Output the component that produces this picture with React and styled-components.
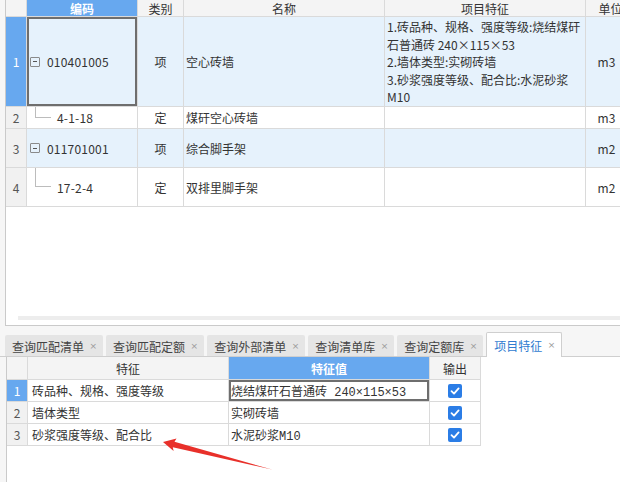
import React from "react";
import styled, { createGlobalStyle, css } from "styled-components";

const GlobalStyle = createGlobalStyle`
  html, body { margin: 0; padding: 0; background: #f6f6f6; }
  body { font-family: "Noto Sans CJK SC", "Noto Sans", sans-serif; }
  * { box-sizing: border-box; }
`;

const BLUE = "#67a8ef";
const LINE = "#dadada";

const Screen = styled.div`
  position: relative;
  width: 620px;
  height: 482px;
  overflow: hidden;
  background: #f6f6f6;
  display: flex;
  flex-direction: column;
  font-size: 12px;
  color: #333;
`;

const TopPanel = styled.div`
  margin-left: 5px;
  height: 326px;
  flex: none;
  border-left: 1px solid #cacaca;
  border-bottom: 1px solid #cacaca;
  background: #fff;
  display: flex;
  flex-direction: column;
  overflow: hidden;
`;

const topCols = "21px 111px 46px 201px 201px 50px";

const Row = styled.div`
  display: grid;
  grid-template-columns: ${(p) => p.$cols};
  height: ${(p) => p.$h}px;
  flex: none;
  background: ${(p) => (p.$tint ? "#e6f2fc" : "#fff")};
`;

const Cell = styled.div`
  position: relative;
  border-right: 1px solid ${LINE};
  border-bottom: 1px solid ${LINE};
  display: flex;
  align-items: center;
  justify-content: ${(p) => (p.$center ? "center" : "flex-start")};
  padding-left: ${(p) => (p.$pad ?? 2)}px;
  white-space: nowrap;
  overflow: hidden;
  ${(p) =>
    p.$selected &&
    css`
      box-shadow: inset 0 0 0 2px #6e6e6e;
    `}
`;

const HeadCell = styled(Cell)`
  justify-content: center;
  padding-left: 0;
  background: ${(p) => (p.$active ? BLUE : "#f4f4f4")};
  color: ${(p) => (p.$active ? "#fff" : "#333")};
  font-weight: ${(p) => (p.$active ? 700 : 400)};
`;

const NumCell = styled(Cell)`
  justify-content: center;
  padding-left: 0;
  background: ${(p) => (p.$active ? BLUE : "#f1f1f1")};
  color: ${(p) => (p.$active ? "#fff" : "#555")};
`;

const UnitCell = styled(Cell)`
  justify-content: center;
  padding: 0 8px 0 0;
`;

const CodeCell = styled(Cell)`
  padding-left: 3px;
  align-items: ${(p) => (p.$child ? "stretch" : "center")};
`;

const Toggle = styled.span`
  width: 10px;
  height: 10px;
  border: 1px solid #8a8a8a;
  border-radius: 1px;
  margin-right: 7px;
  display: flex;
  align-items: center;
  justify-content: center;
  flex: none;
  &::after {
    content: "";
    width: 4px;
    height: 1px;
    background: #555;
  }
`;

const TreeLine = styled.span`
  width: 16px;
  height: 50%;
  margin-left: 5px;
  margin-right: 6px;
  border-left: 1px solid #bcbcbc;
  border-bottom: 1px solid #bcbcbc;
  flex: none;
`;

const CodeText = styled.span`
  align-self: center;
  letter-spacing: 0.2px;
`;

const FeatureText = styled.div`
  white-space: pre-line;
  line-height: 17.5px;
  padding-top: 1px;
`;

const Filler = styled.div`
  flex: 1;
`;

const ScrollTrack = styled.div`
  height: 4px;
  margin: 0 0 5px 12px;
  background: #ededed;
  flex: none;
`;

const TabBar = styled.div`
  margin-top: 6px;
  height: 25px;
  flex: none;
  display: flex;
  align-items: flex-end;
  gap: 3px;
  padding-left: 5px;
  border-bottom: 1px solid #cfcfcf;
`;

const Tab = styled.div`
  height: ${(p) => (p.$active ? 25 : 21)}px;
  margin-bottom: ${(p) => (p.$active ? -1 : 0)}px;
  padding: 0 6px 0 7px;
  display: flex;
  align-items: center;
  gap: 5.5px;
  border-radius: 2px 2px 0 0;
  background: ${(p) => (p.$active ? "#fff" : "#e5e5e5")};
  border: ${(p) => (p.$active ? "1px solid #cfcfcf" : "none")};
  border-bottom: none;
  color: ${(p) => (p.$active ? "#2f7bd0" : "#444")};
  white-space: nowrap;
  padding-top: ${(p) => (p.$active ? 0 : 1)}px;
`;

const TabClose = styled.span`
  font-size: 9px;
  color: #9a9a9a;
  font-family: "DejaVu Sans", sans-serif;
`;

const LowerPanel = styled.div`
  flex: 1;
  margin-left: 6px;
  border-left: 1px solid #cacaca;
  background: #fff;
  display: flex;
  flex-direction: column;
`;

const lowCols = "21px 201px 201px 51px";

const ValueText = styled.span`
  font-family: "Liberation Mono", "Noto Sans CJK SC", monospace;
  font-size: 12px;
`;

const Check = styled.span`
  width: 14px;
  height: 14px;
  border-radius: 2px;
  background: #2b7de6;
  display: flex;
  align-items: center;
  justify-content: center;
`;

const Arrow = styled.svg`
  position: absolute;
  left: 0;
  top: 0;
  pointer-events: none;
`;

const CheckIcon = () => (
  <Check>
    <svg width="10" height="10" viewBox="0 0 10 10">
      <path d="M1.5 5.2 L4 7.6 L8.6 2.4" fill="none" stroke="#fff" strokeWidth="1.8" strokeLinecap="round" strokeLinejoin="round" />
    </svg>
  </Check>
);

const rows = [
  {
    n: 1,
    h: 90,
    tint: true,
    active: true,
    parent: true,
    code: "010401005",
    cat: "项",
    name: "空心砖墙",
    feat: "1.砖品种、规格、强度等级:烧结煤矸\n石普通砖 240×115×53\n2.墙体类型:实砌砖墙\n3.砂浆强度等级、配合比:水泥砂浆\nM10",
    unit: "m3",
  },
  { n: 2, h: 22, code: "4-1-18", cat: "定", name: "煤矸空心砖墙", feat: "", unit: "m3" },
  { n: 3, h: 39, tint: true, parent: true, code: "011701001", cat: "项", name: "综合脚手架", feat: "", unit: "m2" },
  { n: 4, h: 39, code: "17-2-4", cat: "定", name: "双排里脚手架", feat: "", unit: "m2" },
];

const tabs = ["查询匹配清单", "查询匹配定额", "查询外部清单", "查询清单库", "查询定额库", "项目特征"];

const feats = [
  { n: 1, name: "砖品种、规格、强度等级", value: "烧结煤矸石普通砖 240×115×53", active: true },
  { n: 2, name: "墙体类型", value: "实砌砖墙" },
  { n: 3, name: "砂浆强度等级、配合比", value: "水泥砂浆M10" },
];

export default function App() {
  return (
    <>
      <GlobalStyle />
      <Screen>
        <TopPanel>
          <Row $cols={topCols} $h={17}>
            <HeadCell />
            <HeadCell $active>编码</HeadCell>
            <HeadCell>类别</HeadCell>
            <HeadCell>名称</HeadCell>
            <HeadCell>项目特征</HeadCell>
            <HeadCell>单位</HeadCell>
          </Row>
          {rows.map((r) => (
            <Row key={r.n} $cols={topCols} $h={r.h} $tint={r.tint}>
              <NumCell $active={r.active}>{r.n}</NumCell>
              <CodeCell $selected={r.active} $child={!r.parent}>
                {r.parent ? <Toggle /> : <TreeLine />}
                <CodeText>{r.code}</CodeText>
              </CodeCell>
              <Cell $center $pad={0}>{r.cat}</Cell>
              <Cell>{r.name}</Cell>
              <Cell>
                <FeatureText>{r.feat}</FeatureText>
              </Cell>
              <UnitCell>{r.unit}</UnitCell>
            </Row>
          ))}
          <Filler />
          <ScrollTrack />
        </TopPanel>

        <TabBar>
          {tabs.map((t, i) => (
            <Tab key={t} $active={i === tabs.length - 1}>
              {t}
              <TabClose>×</TabClose>
            </Tab>
          ))}
        </TabBar>

        <LowerPanel>
          <Row $cols={lowCols} $h={23}>
            <HeadCell />
            <HeadCell>特征</HeadCell>
            <HeadCell $active>特征值</HeadCell>
            <HeadCell>输出</HeadCell>
          </Row>
          {feats.map((f) => (
            <Row key={f.n} $cols={lowCols} $h={22}>
              <NumCell $active={f.active}>{f.n}</NumCell>
              <Cell $pad={4}>{f.name}</Cell>
              <Cell $pad={2} $selected={f.active}>
                <ValueText>{f.value}</ValueText>
              </Cell>
              <Cell $center $pad={0}>
                <CheckIcon />
              </Cell>
            </Row>
          ))}
        </LowerPanel>

        <Arrow width="620" height="482" viewBox="0 0 620 482">
          <polygon
            points="163,442 176.5,438.5 174.5,441.8 272,469.5 172.8,447.2 173.6,451"
            fill="#e8302a"
          />
        </Arrow>
      </Screen>
    </>
  );
}
